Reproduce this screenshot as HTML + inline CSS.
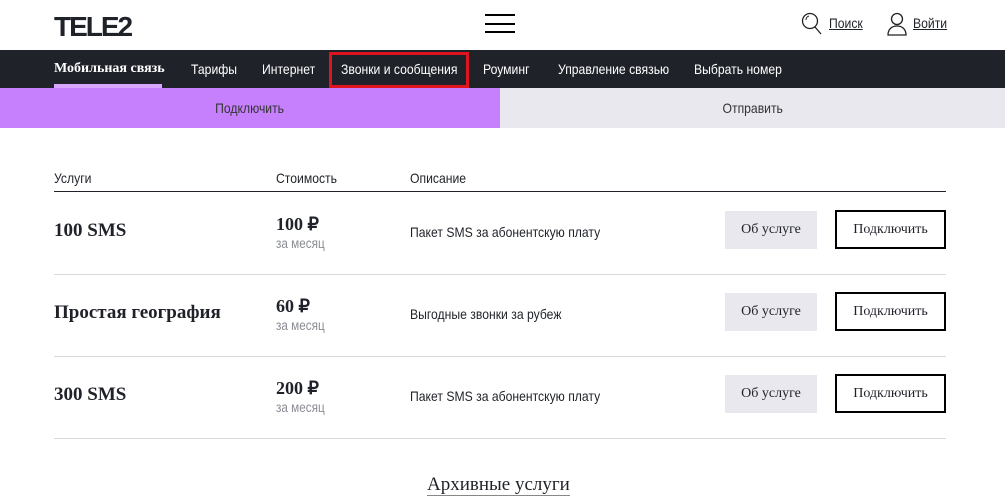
<!DOCTYPE html>
<html><head><meta charset="utf-8"><style>
*{margin:0;padding:0;box-sizing:border-box}
body{width:1005px;height:503px;overflow:hidden;background:#fff;font-family:"Liberation Sans",sans-serif;color:#1f2229;position:relative}
.a{position:absolute;white-space:nowrap}
.c{transform:scaleX(.87);transform-origin:left center}
.nav{position:absolute;top:50px;left:0;width:1005px;height:38px;background:#1f2229}
.nav span{position:absolute;top:11px;color:#fff;font-size:14px;white-space:nowrap}
.serif{font-family:"Liberation Serif",serif}
.hd{font-size:14px;top:170px;color:#1f2229}
.name{font-family:"Liberation Serif",serif;font-weight:bold;font-size:19px;color:#1f2229}
.price{font-family:"Liberation Serif",serif;font-weight:bold;font-size:18px}
.mes{font-size:13.5px;color:#8a8d93}
.desc{font-size:14px}
.b1{position:absolute;left:725px;width:92px;height:38px;background:#e9e8ee;font-family:"Liberation Serif",serif;font-size:14px;text-align:center;line-height:38px}
.b2{position:absolute;left:835px;width:111px;height:39px;border:2px solid #000;font-family:"Liberation Serif",serif;font-size:14px;text-align:center;line-height:35px}
.sep{position:absolute;left:54px;width:892px;height:1px;background:#d9d9dd}
</style></head><body>
<div class="a" style="left:54px;top:11px;font-family:'Liberation Sans',sans-serif;font-weight:900;font-size:28px;letter-spacing:-2px">TELE2</div>
<div class="a" style="left:485px;top:14px;width:30px;height:2px;background:#000"></div>
<div class="a" style="left:485px;top:23px;width:30px;height:2px;background:#000"></div>
<div class="a" style="left:485px;top:31px;width:30px;height:2px;background:#000"></div>
<svg class="a" style="left:801px;top:12px" width="22" height="24" viewBox="0 0 22 24"><circle cx="9" cy="9" r="7.5" fill="none" stroke="#222" stroke-width="1.3"/><path d="M14 15l6 7" stroke="#222" stroke-width="1.3"/><path d="M5 8a4 4 0 0 1 3-4" stroke="#222" fill="none"/></svg>
<div class="a c" style="left:829px;top:15px;font-size:14px;text-decoration:underline">Поиск</div>
<svg class="a" style="left:886px;top:12px" width="22" height="24" viewBox="0 0 22 24"><circle cx="11" cy="7" r="5.5" fill="none" stroke="#222" stroke-width="1.3"/><path d="M2 23c0-6 4-9 9-9s9 3 9 9z" fill="none" stroke="#222" stroke-width="1.3"/></svg>
<div class="a c" style="left:913px;top:15px;font-size:14px;text-decoration:underline">Войти</div>
<div class="nav">
<span class="serif" style="left:54px;font-weight:bold">Мобильная связь</span>
<span class="c" style="left:191px">Тарифы</span>
<span class="c" style="left:262px">Интернет</span>
<span class="c" style="left:341px">Звонки и сообщения</span>
<span class="c" style="left:483px">Роуминг</span>
<span class="c" style="left:558px">Управление связью</span>
<span class="c" style="left:694px">Выбрать номер</span>
<div style="position:absolute;left:54px;top:34px;width:108px;height:4px;background:#d8a6fc"></div>
<div style="position:absolute;left:329px;top:2px;width:140px;height:36px;border:3px solid #e0141e"></div>
</div>
<div class="a" style="left:0;top:88px;width:500px;height:40px;background:#c680fd;text-align:center;line-height:40px;font-size:14px;color:#333"><span style="display:inline-block;transform:scaleX(.87)">Подключить</span></div>
<div class="a" style="left:500px;top:88px;width:505px;height:40px;background:#e9e8ee;text-align:center;line-height:40px;font-size:14px;color:#333"><span style="display:inline-block;transform:scaleX(.87)">Отправить</span></div>
<div class="a hd c" style="left:54px">Услуги</div>
<div class="a hd c" style="left:276px">Стоимость</div>
<div class="a hd c" style="left:410px">Описание</div>
<div class="a" style="left:54px;top:191px;width:892px;height:1px;background:#1f2229"></div>

<div class="a name" style="left:54px;top:220px">100 SMS</div>
<div class="a price" style="left:276px;top:214px">100 ₽</div>
<div class="a mes c" style="left:276px;top:236px">за месяц</div>
<div class="a desc c" style="left:410px;top:224px">Пакет SMS за абонентскую плату</div>
<div class="b1" style="top:211px">Об услуге</div><div class="b2" style="top:210px">Подключить</div>
<div class="sep" style="top:274px"></div>

<div class="a name" style="left:54px;top:302px">Простая география</div>
<div class="a price" style="left:276px;top:296px">60 ₽</div>
<div class="a mes c" style="left:276px;top:318px">за месяц</div>
<div class="a desc c" style="left:410px;top:306px">Выгодные звонки за рубеж</div>
<div class="b1" style="top:293px">Об услуге</div><div class="b2" style="top:292px">Подключить</div>
<div class="sep" style="top:356px"></div>

<div class="a name" style="left:54px;top:384px">300 SMS</div>
<div class="a price" style="left:276px;top:378px">200 ₽</div>
<div class="a mes c" style="left:276px;top:400px">за месяц</div>
<div class="a desc c" style="left:410px;top:388px">Пакет SMS за абонентскую плату</div>
<div class="b1" style="top:375px">Об услуге</div><div class="b2" style="top:374px">Подключить</div>
<div class="sep" style="top:438px"></div>

<div class="a" style="left:427px;top:474px;font-family:'Liberation Serif',serif;font-size:19px;border-bottom:1px solid #888;line-height:21px">Архивные услуги</div>
</body></html>
